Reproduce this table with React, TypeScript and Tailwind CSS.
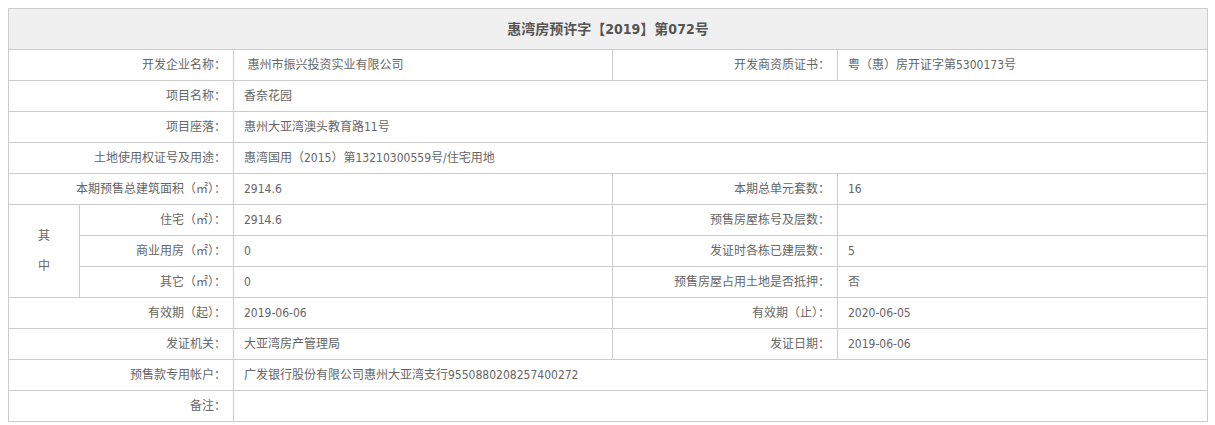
import React from 'react';

const font = {
  fontFamily: '"DejaVu Sans Condensed", "Liberation Sans", "Noto Sans CJK SC", sans-serif',
};

function Label({ children, span = 2 }: { children?: React.ReactNode; span?: number }) {
  return (
    <div
      className={`${span === 2 ? 'col-span-2' : 'col-span-1'} h-[31px] border-r border-b border-[#cccccc] flex items-center justify-end pr-[7px] text-[12px] text-[#666666] whitespace-nowrap`}
    >
      {children}
    </div>
  );
}

function Value({ children, span = 1 }: { children?: React.ReactNode; span?: number }) {
  return (
    <div
      className={`${span === 3 ? 'col-span-3' : 'col-span-1'} h-[31px] border-r border-b border-[#cccccc] flex items-center pl-[10px] text-[12px] text-[#666666] whitespace-nowrap`}
    >
      {children}
    </div>
  );
}

export default function App() {
  return (
    <div className="min-h-screen bg-white p-2" style={font}>
      <div className="grid w-[1200px] grid-cols-[71px_154px_379px_225px_370px] border-t border-l border-[#cccccc]">
        {/* title */}
        <div className="col-span-5 h-[41px] border-r border-b border-[#cccccc] bg-[#f0f0f0] flex items-center justify-center text-[14px] font-bold text-[#555555]">
          惠湾房预许字【2019】第072号
        </div>

        <Label>开发企业名称：</Label>
        <Value>&nbsp;惠州市振兴投资实业有限公司</Value>
        <Label span={1}>开发商资质证书：</Label>
        <Value>粤（惠）房开证字第5300173号</Value>

        <Label>项目名称：</Label>
        <Value span={3}>香奈花园</Value>

        <Label>项目座落：</Label>
        <Value span={3}>惠州大亚湾澳头教育路11号</Value>

        <Label>土地使用权证号及用途：</Label>
        <Value span={3}>惠湾国用（2015）第13210300559号/住宅用地</Value>

        <Label>本期预售总建筑面积（㎡）：</Label>
        <Value>2914.6</Value>
        <Label span={1}>本期总单元套数：</Label>
        <Value>16</Value>

        {/* 其中 block */}
        <div className="row-span-3 border-r border-b border-[#cccccc] flex flex-col items-center justify-center gap-[12px] text-[12px] text-[#666666]">
          <span>其</span>
          <span>中</span>
        </div>
        <Label span={1}>住宅（㎡）：</Label>
        <Value>2914.6</Value>
        <Label span={1}>预售房屋栋号及层数：</Label>
        <Value />

        <Label span={1}>商业用房（㎡）：</Label>
        <Value>0</Value>
        <Label span={1}>发证时各栋已建层数：</Label>
        <Value>5</Value>

        <Label span={1}>其它（㎡）：</Label>
        <Value>0</Value>
        <Label span={1}>预售房屋占用土地是否抵押：</Label>
        <Value>否</Value>

        <Label>有效期（起）：</Label>
        <Value>2019-06-06</Value>
        <Label span={1}>有效期（止）：</Label>
        <Value>2020-06-05</Value>

        <Label>发证机关：</Label>
        <Value>大亚湾房产管理局</Value>
        <Label span={1}>发证日期：</Label>
        <Value>2019-06-06</Value>

        <Label>预售款专用帐户：</Label>
        <Value span={3}>广发银行股份有限公司惠州大亚湾支行9550880208257400272</Value>

        <Label>备注：</Label>
        <Value span={3} />
      </div>
    </div>
  );
}
